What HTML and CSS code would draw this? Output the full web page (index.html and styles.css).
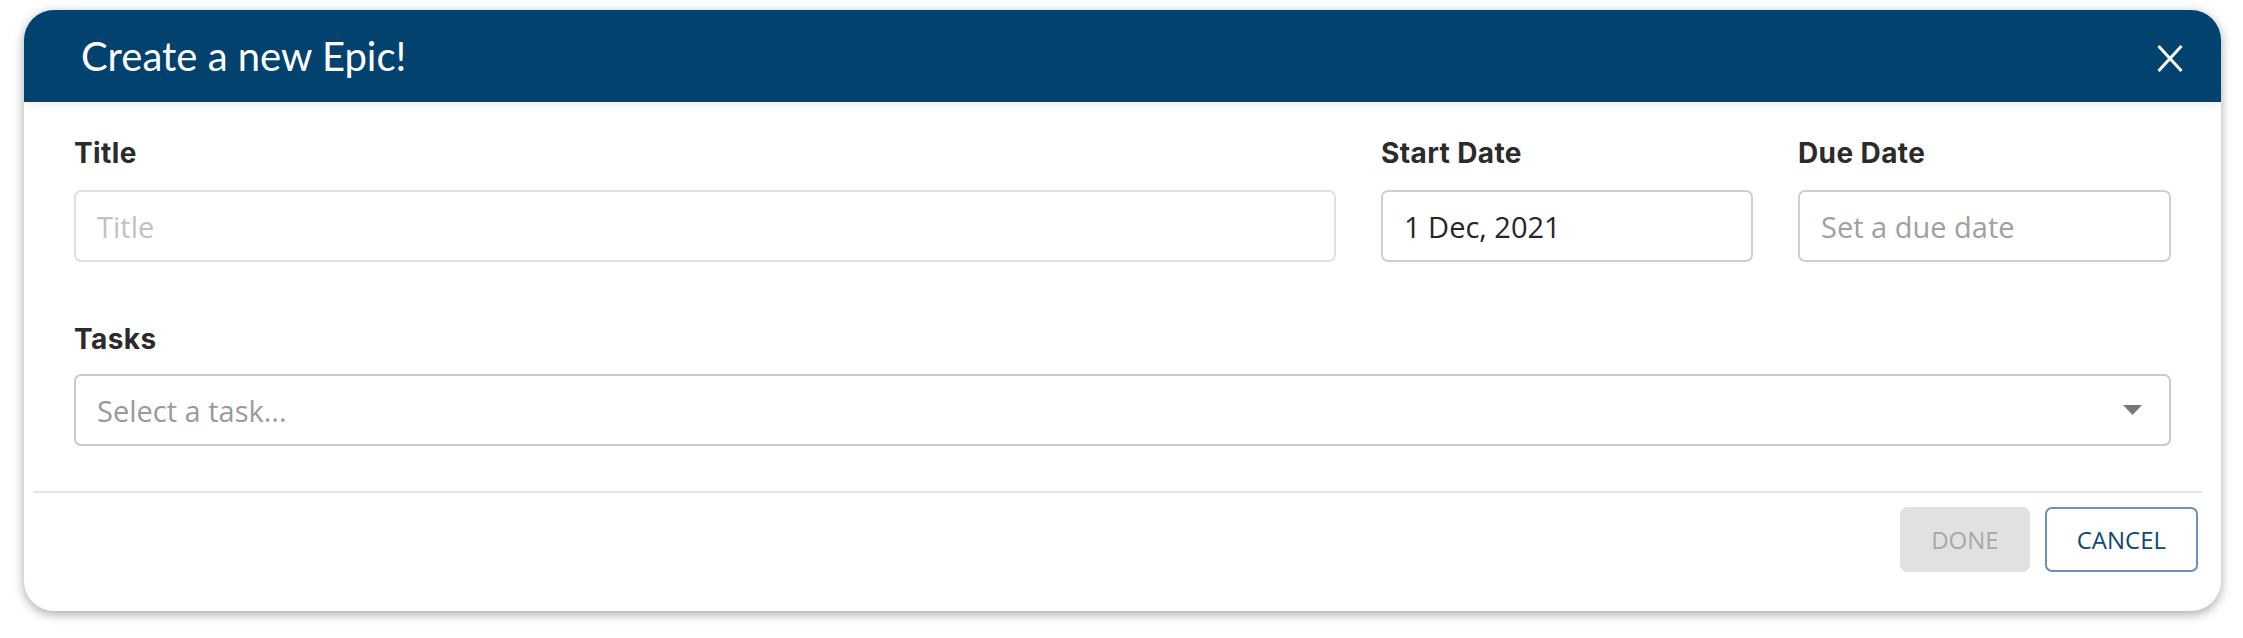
FILE: index.html
```html
<!DOCTYPE html>
<html lang="en">
<head>
  <meta charset="UTF-8">
  <title>Create a new Epic</title>
  <link rel="stylesheet" href="styles.css">
</head>
<body>
  <div class="page">
    <div class="modal">
      <div class="modal-header">
        <h1>Create a new Epic!</h1>
        <button class="close-btn" aria-label="Close">
          <svg width="26" height="27" viewBox="0 0 26 27">
            <line x1="1.5" y1="1" x2="24.5" y2="26" stroke="#fff" stroke-width="3" />
            <line x1="24.5" y1="1" x2="1.5" y2="26" stroke="#fff" stroke-width="3" />
          </svg>
        </button>
      </div>

      <div class="modal-body">
        <div class="row">
          <div class="field">
            <label>Title</label>
            <input type="text" class="input input-light" placeholder="Title">
          </div>
          <div class="field">
            <label>Start Date</label>
            <input type="text" class="input" value="1 Dec, 2021">
          </div>
          <div class="field">
            <label>Due Date</label>
            <input type="text" class="input" placeholder="Set a due date">
          </div>
        </div>

        <div class="field tasks">
          <label>Tasks</label>
          <div class="select">
            <span>Select a task...</span>
            <svg width="19" height="10" viewBox="0 0 19 10">
              <path d="M0 0 L19 0 L9.5 10 Z" fill="#777" />
            </svg>
          </div>
        </div>
      </div>

      <div class="modal-footer">
        <button class="btn btn-done" disabled>DONE</button>
        <button class="btn btn-cancel">CANCEL</button>
      </div>
    </div>
  </div>
</body>
</html>
```

FILE: styles.css
```css
body {
  margin: 0;
  background-color: white;
  font-family: "Open Sans", sans-serif;
}

.page {
  padding: 10px 22px 26px 24px;
}

.modal {
  background-color: white;
  border-radius: 30px;
  overflow: hidden;
  box-shadow: 0 3px 11px rgba(0, 0, 0, 0.35);
}

.modal-header {
  position: relative;
  z-index: 1;
  height: 92px;
  background-color: #01426f;
  display: flex;
  align-items: center;
  justify-content: space-between;
  padding: 0 38px 0 57px;
  box-shadow: 0 3px 8px rgba(0, 0, 0, 0.07);
}

.modal-header h1 {
  margin: 0;
  color: white;
  font-family: Lato, sans-serif;
  font-weight: 400;
  font-size: 40px;
}

.close-btn {
  background: none;
  border: none;
  padding: 0;
  margin-top: 4px;
  display: flex;
  cursor: pointer;
}

.modal-body {
  padding: 35px 50px 45px 50px;
}

.row {
  display: grid;
  grid-template-columns: 1fr 372px 373px;
  gap: 45px;
}

.field label {
  display: block;
  font-family: Inter, sans-serif;
  font-weight: 700;
  font-size: 28px;
  letter-spacing: 0.4px;
  line-height: 32px;
  color: #2b2b2b;
  margin-bottom: 21px;
}

.input {
  box-sizing: border-box;
  width: 100%;
  height: 72px;
  padding: 0 21px;
  border: 2px solid #cfcfcf;
  border-radius: 7px;
  font-family: "Open Sans", sans-serif;
  font-size: 29px;
  color: #262626;
  outline: none;
}

.input::placeholder {
  color: #a0a0a0;
}

.input-light {
  border-color: #e0e0e0;
}

.input-light::placeholder {
  color: #c2c2c2;
}

.tasks {
  margin-top: 61px;
}

.tasks label {
  margin-bottom: 19px;
}

.select {
  box-sizing: border-box;
  height: 72px;
  padding: 0 27px 0 21px;
  border: 2px solid #cacaca;
  border-radius: 7px;
  display: flex;
  align-items: center;
  justify-content: space-between;
  font-size: 29px;
  color: #9a9a9a;
}

.modal-footer {
  margin: 0 19px 0 9px;
  border-top: 2px solid #e6e6e6;
  padding: 14px 4px 39px;
  display: flex;
  justify-content: flex-end;
  gap: 15px;
}

.btn {
  height: 65px;
  padding: 0 30px;
  border-radius: 7px;
  font-family: "Open Sans", sans-serif;
  font-size: 24px;
  cursor: pointer;
}

.btn-done {
  background-color: #e1e1e1;
  border: 1px solid #e1e1e1;
  color: #a8a8a8;
  cursor: default;
}

.btn-cancel {
  background-color: white;
  border: 2px solid #6b91b4;
  color: #0f4876;
}
```
